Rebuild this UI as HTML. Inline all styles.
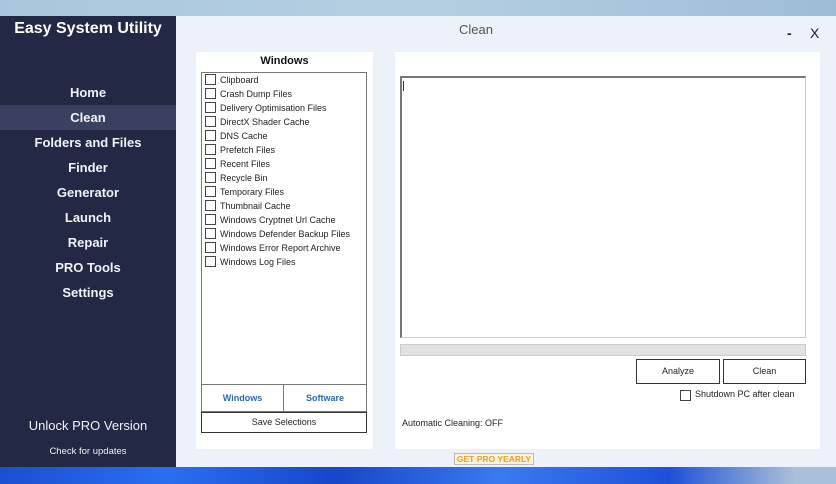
<!DOCTYPE html>
<html><head><style>
*{margin:0;padding:0;box-sizing:border-box}
body{width:836px;height:484px;overflow:hidden;position:relative;font-family:"Liberation Sans",sans-serif;background:linear-gradient(90deg,#a9c7dc,#b5cfe2 50%,#9dbdd6);}
.abs{position:absolute}
#wall{left:0;top:467px;width:836px;height:17px;background:linear-gradient(90deg,#1a4fd0 0%,#2a6ff0 20%,#1746c8 40%,#3a7af0 60%,#1e50d8 80%,#a8c0d8 95%)}
#side{left:0;top:16px;width:176px;height:451px;background:#232845;color:#fff;text-align:center}
#main{left:176px;top:16px;width:660px;height:451px;background:#edf1fa}
.nav{position:absolute;left:0;width:176px;font-size:13px;font-weight:bold;color:#f0f2f8}
.panel{position:absolute;background:#fff}
.it{position:absolute;left:3px;font-size:9px;color:#222;height:14px;line-height:14px;white-space:nowrap}
.it i{display:inline-block;width:11px;height:11px;border:1px solid #444;vertical-align:-2px;margin-right:4px;background:#fff}
.btn{position:absolute;border:1px solid #333;background:#fff;font-size:9px;text-align:center;color:#222}
</style></head><body>
<div id="wall" class="abs"></div>
<div id="side" class="abs">
<div class="abs" style="left:0;top:4px;width:176px;font-size:16px;font-weight:bold">Easy System Utility</div>
<div class="abs" style="left:0;top:89px;width:176px;height:25px;background:#3a4060"></div>
<div class="nav" style="top:69px">Home</div>
<div class="nav" style="top:94px">Clean</div>
<div class="nav" style="top:119px">Folders and Files</div>
<div class="nav" style="top:144px">Finder</div>
<div class="nav" style="top:169px">Generator</div>
<div class="nav" style="top:194px">Launch</div>
<div class="nav" style="top:219px">Repair</div>
<div class="nav" style="top:244px">PRO Tools</div>
<div class="nav" style="top:269px">Settings</div>
<div class="nav" style="top:402px;font-weight:normal;font-size:13px">Unlock PRO Version</div>
<div class="nav" style="top:430px;font-weight:normal;font-size:9.5px">Check for updates</div>
</div>
<div id="main" class="abs">
<div class="abs" style="left:283px;top:6px;font-size:13px;color:#555">Clean</div>
<div class="abs" style="left:611px;top:9px;font-size:14px;color:#222;font-weight:bold">-</div>
<div class="abs" style="left:634px;top:9px;font-size:14px;color:#222">X</div>
<div class="panel" style="left:20px;top:36px;width:177px;height:397px">
<div class="abs" style="left:0;top:3px;width:177px;text-align:center;font-size:11px;font-weight:bold;color:#111">Windows</div>
<div class="abs" style="left:5px;top:20px;width:166px;height:313px;border:1px solid #777;border-bottom:none">
<div class="it" style="top:0">  <i></i>Clipboard</div>
<div class="it" style="top:14px"><i></i>Crash Dump Files</div>
<div class="it" style="top:28px"><i></i>Delivery Optimisation Files</div>
<div class="it" style="top:42px"><i></i>DirectX Shader Cache</div>
<div class="it" style="top:56px"><i></i>DNS Cache</div>
<div class="it" style="top:70px"><i></i>Prefetch Files</div>
<div class="it" style="top:84px"><i></i>Recent Files</div>
<div class="it" style="top:98px"><i></i>Recycle Bin</div>
<div class="it" style="top:112px"><i></i>Temporary Files</div>
<div class="it" style="top:126px"><i></i>Thumbnail Cache</div>
<div class="it" style="top:140px"><i></i>Windows Cryptnet Url Cache</div>
<div class="it" style="top:154px"><i></i>Windows Defender Backup Files</div>
<div class="it" style="top:168px"><i></i>Windows Error Report Archive</div>
<div class="it" style="top:182px"><i></i>Windows Log Files</div>
</div>
<div class="abs" style="left:5px;top:332px;width:83px;height:28px;border:1px solid #777;color:#2a6ab8;font-size:9px;font-weight:bold;text-align:center;line-height:26px">Windows</div>
<div class="abs" style="left:87px;top:332px;width:84px;height:28px;border:1px solid #777;color:#2a6ab8;font-size:9px;font-weight:bold;text-align:center;line-height:26px">Software</div>
<div class="btn" style="left:5px;top:360px;width:166px;height:21px;line-height:19px">Save Selections</div>
</div>
<div class="panel" style="left:219px;top:36px;width:425px;height:397px">
<div class="abs" style="left:5px;top:24px;width:406px;height:262px;border:1px solid #ccc;border-top:2px solid #777;border-left:2px solid #777"><div class="abs" style="left:1px;top:3px;width:1px;height:10px;background:#333"></div></div>
<div class="abs" style="left:5px;top:292px;width:406px;height:12px;background:#e2e2e2;border:1px solid #ccc"></div>
<div class="btn" style="left:241px;top:307px;width:84px;height:25px;line-height:23px">Analyze</div>
<div class="btn" style="left:328px;top:307px;width:83px;height:25px;line-height:23px">Clean</div>
<div class="abs" style="left:285px;top:338px;width:11px;height:11px;border:1px solid #444"></div>
<div class="abs" style="left:300px;top:337px;font-size:9px;color:#222">Shutdown PC after clean</div>
<div class="abs" style="left:7px;top:366px;font-size:9px;color:#222">Automatic Cleaning: OFF</div>
</div>
<div class="abs" style="left:278px;top:437px;width:80px;height:12px;border:1px solid #bbb;background:#fbf3df;color:#e8a020;font-size:8.5px;font-weight:bold;text-align:center;line-height:10px">GET PRO YEARLY</div>
</div>
</body></html>
